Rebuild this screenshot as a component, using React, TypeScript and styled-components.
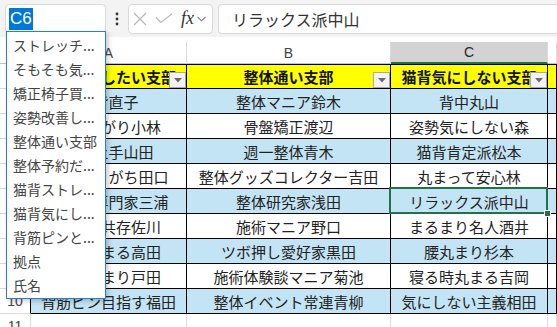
import * as React from 'react';
import styled, { createGlobalStyle, css } from 'styled-components';

type Tone = 'head' | 'blue' | 'white' | 'blank';

const GlobalStyle = createGlobalStyle`
    html, body {
        margin: 0;
        padding: 0;
        background: #fff;
    }
    body {
        font-family: "Noto Sans CJK JP", "Noto Sans", sans-serif;
    }
`;

const Window = styled.div`
    position: relative;
    width: 557px;
    height: 327px;
    overflow: hidden;
    background: #fff;
`;

/* ---------- formula bar ---------- */

const FormulaBar = styled.div`
    display: flex;
    align-items: center;
    height: 37px;
    padding-left: 5px;
    box-sizing: border-box;
    background: #f3f3f3;
`;

const NameBox = styled.div`
    display: flex;
    align-items: center;
    width: 101px;
    height: 30px;
    box-sizing: border-box;
    padding-left: 3px;
    background: #fff;
    border: 1px solid #d9d9d9;
    border-radius: 4px;
`;

const Selected = styled.span`
    padding: 0 1px;
    line-height: 22px;
    font-family: "Liberation Sans", Arial, sans-serif;
    font-size: 17px;
    color: #fff;
    background: #0078d7;
`;

const Kebab = styled.div`
    display: flex;
    justify-content: center;
    width: 22px;
`;

const IconBox = styled.div`
    display: flex;
    align-items: center;
    width: 85px;
    height: 30px;
    box-sizing: border-box;
    padding-left: 4px;
    background: #fff;
    border: 1px solid #d9d9d9;
    border-radius: 4px;
`;

const Fx = styled.span`
    margin-left: 8px;
    font-family: "Liberation Serif", "Times New Roman", serif;
    font-style: italic;
    font-size: 18px;
    color: #333;
`;

const FormulaInput = styled.div`
    flex: 1;
    display: flex;
    align-items: center;
    height: 30px;
    margin-left: 5px;
    box-sizing: border-box;
    padding-left: 13px;
    background: #fff;
    border: 1px solid #d9d9d9;
    border-right: none;
    border-radius: 4px 0 0 4px;
    font-size: 16px;
    color: #333;
`;

/* ---------- sheet grid ---------- */

const Sheet = styled.div`
    display: grid;
    grid-template-columns: 31px 156px 204px 157px 1fr;
    grid-template-rows: 22px repeat(11, 25px);
    padding-top: 5px;
`;

const Corner = styled.div`
    border-right: 1px solid #dadada;
    border-bottom: 1px solid #c4c4c4;
`;

const ColHead = styled.div<{ $active?: boolean }>`
    display: flex;
    align-items: center;
    justify-content: center;
    box-sizing: border-box;
    font-family: "Liberation Sans", Arial, sans-serif;
    font-size: 14px;
    color: #444;
    border-right: 1px solid #dadada;
    border-bottom: 1px solid #c4c4c4;
    ${(p) => p.$active && css`
        background: #d3d3d3;
        color: #262626;
        border-bottom: 2px solid #217346;
    `}
`;

const RowHead = styled.div<{ $edge?: boolean }>`
    display: flex;
    align-items: center;
    justify-content: center;
    box-sizing: border-box;
    font-family: "Liberation Sans", Arial, sans-serif;
    font-size: 14px;
    color: #444;
    border-right: 1px solid ${(p) => (p.$edge ? '#000' : '#dadada')};
    border-bottom: 1px solid #dadada;
`;

const toneBg: Record<Tone, string> = {
    head: '#ffff00',
    blue: '#c3e4f4',
    white: '#ffffff',
    blank: '#ffffff',
};

const Cell = styled.div<{ $tone: Tone; $selected?: boolean }>`
    position: relative;
    display: flex;
    align-items: center;
    justify-content: center;
    box-sizing: border-box;
    white-space: nowrap;
    font-size: 15px;
    color: #222;
    background: ${(p) => toneBg[p.$tone]};
    border-right: 1px solid #000;
    border-bottom: 1px solid #000;
    ${(p) => p.$tone === 'head' && css`
        font-weight: 700;
        color: #111;
        border-top: 1px solid #000;
    `}
    ${(p) => p.$tone === 'blank' && css`
        border-color: #dadada;
    `}
    ${(p) => p.$selected && css`
        z-index: 2;
        &::after {
            content: '';
            position: absolute;
            top: -2px;
            left: -2px;
            right: -1px;
            bottom: -1px;
            border: 2px solid #217346;
        }
        &::before {
            content: '';
            position: absolute;
            right: -4px;
            bottom: -4px;
            width: 5px;
            height: 5px;
            background: #217346;
            border: 1px solid #fff;
            z-index: 3;
        }
    `}
`;

const FilterButton = styled.div`
    position: absolute;
    right: 0;
    bottom: 0;
    display: flex;
    align-items: center;
    justify-content: center;
    width: 17px;
    height: 16px;
    box-sizing: border-box;
    background: #f2f2f2;
    border: 1px solid #a8a8a8;
`;

/* ---------- autocomplete list ---------- */

const Dropdown = styled.ul`
    position: absolute;
    left: 6px;
    top: 31px;
    width: 100px;
    margin: 0;
    padding: 1px 0;
    box-sizing: border-box;
    list-style: none;
    background: #fff;
    border: 1px solid #2b7cd3;
    box-shadow: 2px 2px 5px rgba(0, 0, 0, 0.22);
    z-index: 10;
`;

const Item = styled.li`
    height: 24px;
    line-height: 24px;
    padding-left: 6px;
    font-size: 14px;
    color: #444;
    white-space: nowrap;
    overflow: hidden;
`;

const suggestions = [
    'ストレッチ...',
    'そもそも気...',
    '矯正椅子買...',
    '姿勢改善し...',
    '整体通い支部',
    '整体予約だ...',
    '猫背ストレ...',
    '猫背気にし...',
    '背筋ピンと...',
    '拠点',
    '氏名',
];

const header = ['姿勢改善したい支部', '整体通い支部', '猫背気にしない支部'];

const rows = [
    ['猫背直子', '整体マニア鈴木', '背中丸山'],
    ['背中曲がり小林', '骨盤矯正渡辺', '姿勢気にしない森'],
    ['姿勢上手山田', '週一整体青木', '猫背肯定派松本'],
    ['前のめりがち田口', '整体グッズコレクター吉田', '丸まって安心林'],
    ['姿勢の専門家三浦', '整体研究家浅田', 'リラックス派中山'],
    ['丸背と共存佐川', '施術マニア野口', 'まるまり名人酒井'],
    ['背中丸まる高田', 'ツボ押し愛好家黒田', '腰丸まり杉本'],
    ['背中丸まり戸田', '施術体験談マニア菊池', '寝る時丸まる吉岡'],
    ['背筋ピン目指す福田', '整体イベント常連青柳', '気にしない主義相田'],
];

const CloseIcon = () => (
    <svg width="14" height="14" viewBox="0 0 14 14">
        <path d="M1 1 L13 13 M13 1 L1 13" stroke="#b8b8b8" strokeWidth="1.2" fill="none" />
    </svg>
);

const CheckIcon = () => (
    <svg width="18" height="11" viewBox="0 0 18 11" style={{ marginLeft: 8 }}>
        <path d="M1 4.5 L6 9.5 L17 0.8" stroke="#b8b8b8" strokeWidth="1.2" fill="none" />
    </svg>
);

const Chevron = () => (
    <svg width="9" height="6" viewBox="0 0 9 6" style={{ marginLeft: 3 }}>
        <path d="M0.5 0.8 L4.5 4.8 L8.5 0.8" stroke="#777" strokeWidth="1.1" fill="none" />
    </svg>
);

const Dots = () => (
    <svg width="4" height="14" viewBox="0 0 4 14">
        <circle cx="2" cy="2" r="1.4" fill="#333" />
        <circle cx="2" cy="7" r="1.4" fill="#333" />
        <circle cx="2" cy="12" r="1.4" fill="#333" />
    </svg>
);

const FilterArrow = () => (
    <svg width="8" height="5" viewBox="0 0 8 5">
        <path d="M0 0 L8 0 L4 4.5 Z" fill="#6b6b6b" />
    </svg>
);

const App: React.FC = () => {
    return (
        <Window>
            <GlobalStyle />
            <FormulaBar>
                <NameBox>
                    <Selected>C6</Selected>
                </NameBox>
                <Kebab>
                    <Dots />
                </Kebab>
                <IconBox>
                    <CloseIcon />
                    <CheckIcon />
                    <Fx>fx</Fx>
                    <Chevron />
                </IconBox>
                <FormulaInput>リラックス派中山</FormulaInput>
            </FormulaBar>

            <Sheet>
                <Corner />
                <ColHead>A</ColHead>
                <ColHead>B</ColHead>
                <ColHead $active>C</ColHead>
                <ColHead />

                <RowHead $edge>1</RowHead>
                { header.map((text) => (
                    <Cell key={ text } $tone="head">
                        { text }
                        <FilterButton>
                            <FilterArrow />
                        </FilterButton>
                    </Cell>
                )) }
                <Cell $tone="head" />

                { rows.map((row, i) => {
                    const tone: Tone = i % 2 === 0 ? 'blue' : 'white';
                    return (
                        <React.Fragment key={ i }>
                            <RowHead $edge>{ i + 2 }</RowHead>
                            <Cell $tone={ tone }>{ row[0] }</Cell>
                            <Cell $tone={ tone }>{ row[1] }</Cell>
                            <Cell $tone={ tone } $selected={ i === 4 }>{ row[2] }</Cell>
                            <Cell $tone={ tone } />
                        </React.Fragment>
                    );
                }) }

                <RowHead>11</RowHead>
                <Cell $tone="blank" />
                <Cell $tone="blank" />
                <Cell $tone="blank" />
                <Cell $tone="blank" />
            </Sheet>

            <Dropdown>
                { suggestions.map((s) => (
                    <Item key={ s }>{ s }</Item>
                )) }
            </Dropdown>
        </Window>
    );
};

export default App;
